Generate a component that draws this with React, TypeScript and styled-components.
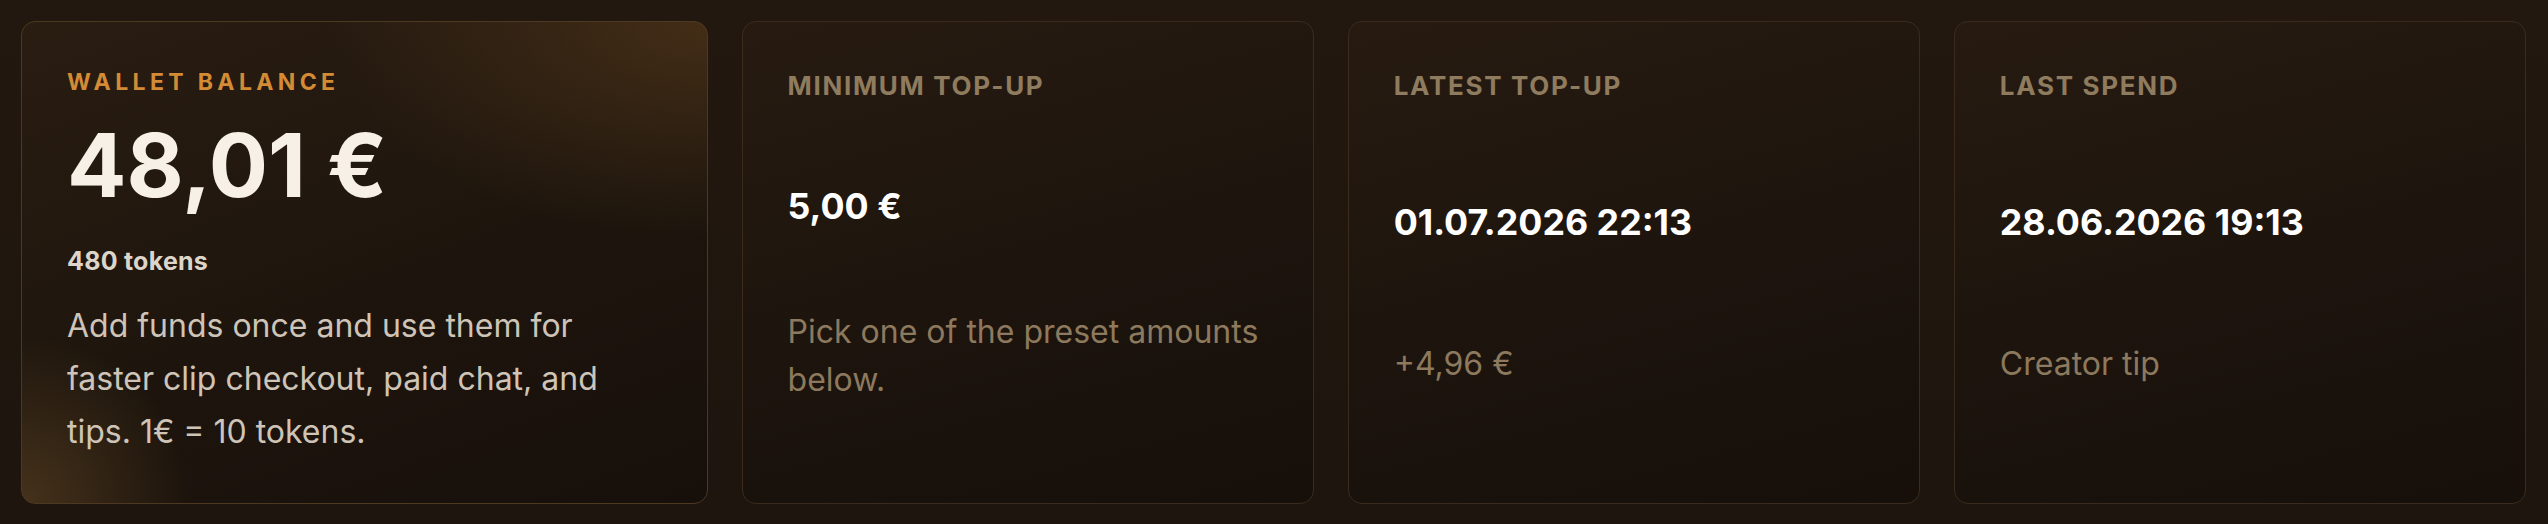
import styled, { createGlobalStyle } from 'styled-components';

const GlobalStyle = createGlobalStyle`
  html, body {
    margin: 0;
    padding: 0;
    background: #1e150e;
  }
  body {
    font-family: Inter, "Noto Sans", "Liberation Sans", sans-serif;
    -webkit-font-smoothing: antialiased;
  }
`;

const Page = styled.div`
  height: 524px;
  box-sizing: border-box;
  padding: 21px 22px 20px 21px;
  background: linear-gradient(180deg, #23180f 0%, #1d150e 100%);
`;

const Grid = styled.section`
  display: grid;
  grid-template-columns: 1.2fr 1fr 1fr 1fr;
  gap: 34px;
  height: 100%;
`;

const Card = styled.article<{ $featured?: boolean }>`
  display: flex;
  flex-direction: column;
  box-sizing: border-box;
  min-width: 0;
  border-radius: 14px;
  padding: ${(p) => (p.$featured ? '46px 45px 44px' : '46px 45px 20px')};
  border: 1px solid ${(p) => (p.$featured ? '#4d3821' : '#3a2b1d')};
  background: ${(p) =>
    p.$featured
      ? `radial-gradient(ellipse 55% 45% at 100% 0%, rgba(100, 66, 30, 0.5), transparent 100%),
         radial-gradient(ellipse 25% 35% at 0% 100%, rgba(112, 80, 42, 0.5), transparent 100%),
         linear-gradient(160deg, #2a1d12 0%, #1d150d 55%, #170f0a 100%)`
      : 'linear-gradient(165deg, #271b11 0%, #1c140d 55%, #160f0a 100%)'};
`;

const Label = styled.div<{ $accent?: boolean }>`
  font-weight: 700;
  text-transform: uppercase;
  font-size: ${(p) => (p.$accent ? '23px' : '26px')};
  line-height: ${(p) => (p.$accent ? 1.24 : 1.4)};
  letter-spacing: ${(p) => (p.$accent ? '0.19em' : '0.065em')};
  color: ${(p) => (p.$accent ? '#d48b35' : '#8f7b5e')};
`;

const Balance = styled.div`
  margin-top: 24px;
  font-size: 88px;
  line-height: 1;
  font-weight: 700;
  color: #f6f0e6;
`;

const Tokens = styled.div`
  margin-top: 35px;
  font-size: 25px;
  line-height: 1.36;
  font-weight: 700;
  letter-spacing: 0.01em;
  color: #ddd5ca;
`;

const Description = styled.p`
  margin: 21px 0 0;
  max-width: 570px;
  font-size: 32px;
  line-height: 1.666;
  color: #cec4b7;
`;

const Body = styled.div`
  flex: 1;
  display: flex;
  flex-direction: column;
  justify-content: space-evenly;
`;

const Value = styled.div`
  font-size: 35.75px;
  line-height: 1.3;
  font-weight: 700;
  color: #ffffff;
`;

const Note = styled.div`
  font-size: 32px;
  line-height: 1.5;
  color: #8d795d;
`;

type Stat = { label: string; value: string; note: string };

const stats: Stat[] = [
  { label: 'Minimum top-up', value: '5,00 €', note: 'Pick one of the preset amounts below.' },
  { label: 'Latest top-up', value: '01.07.2026 22:13', note: '+4,96 €' },
  { label: 'Last spend', value: '28.06.2026 19:13', note: 'Creator tip' },
];

const StatCard = ({ label, value, note }: Stat) => (
  <Card>
    <Label>{label}</Label>
    <Body>
      <Value>{value}</Value>
      <Note>{note}</Note>
    </Body>
  </Card>
);

const App = () => (
  <Page>
    <GlobalStyle />
    <Grid>
      <Card $featured>
        <Label $accent>Wallet balance</Label>
        <Balance>48,01 €</Balance>
        <Tokens>480 tokens</Tokens>
        <Description>
          Add funds once and use them for faster clip checkout, paid chat, and tips. 1€ = 10 tokens.
        </Description>
      </Card>
      {stats.map((s) => (
        <StatCard key={s.label} {...s} />
      ))}
    </Grid>
  </Page>
);

export default App;
